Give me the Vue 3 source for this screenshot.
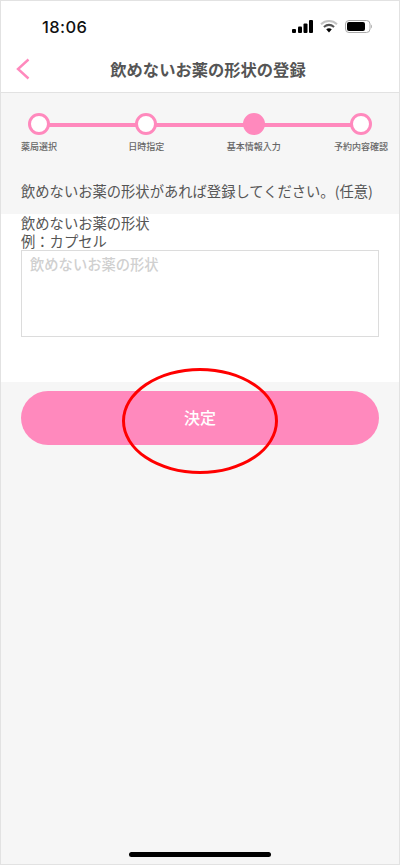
<script setup>
const steps = [
  { label: '薬局選択', active: false },
  { label: '日時指定', active: false },
  { label: '基本情報入力', active: true },
  { label: '予約内容確認', active: false }
]
</script>

<template>
  <div class="phone">
    <header class="top">
      <div class="status">
        <span class="time">18:06</span>
        <div class="status-icons">
          <svg width="21" height="13" viewBox="0 0 21 13">
            <rect x="0" y="9" width="4" height="4" rx="1" fill="#000" />
            <rect x="6" y="6.5" width="4" height="6.5" rx="1" fill="#000" />
            <rect x="11.5" y="3.5" width="4" height="9.5" rx="1" fill="#000" />
            <rect x="17" y="0" width="4" height="13" rx="1" fill="#000" />
          </svg>
          <svg width="18" height="13" viewBox="0 0 18 13">
            <path d="M1 4.2C5.6 0 12.4 0 17 4.2" fill="none" stroke="#c4c4c4" stroke-width="2" />
            <path d="M3.9 7C7 4.4 11 4.4 14.1 7" fill="none" stroke="#555" stroke-width="2" />
            <path d="M6.2 9.2 9 12.4l2.8-3.2C10 7.9 8 7.9 6.2 9.2z" fill="#000" />
          </svg>
          <svg width="28" height="13" viewBox="0 0 28 13">
            <rect x="0.5" y="0.5" width="24.5" height="12" rx="3.5" fill="none" stroke="#aaa" />
            <rect x="2" y="2" width="18" height="9" rx="2" fill="#000" />
            <path d="M26 4.5c1.2.4 1.2 3.6 0 4z" fill="#aaa" />
          </svg>
        </div>
      </div>
      <div class="nav">
        <svg class="back" width="14" height="22" viewBox="0 0 14 22">
          <path d="M12.5 1.5 2 11l10.5 9.5" fill="none" stroke="#ff89bd" stroke-width="2.4" />
        </svg>
        <h1>飲めないお薬の形状の登録</h1>
      </div>
    </header>

    <section class="intro">
      <div class="steps">
        <div v-for="step in steps" :key="step.label" class="step">
          <span class="dot" :class="{ active: step.active }"></span>
          <span class="step-label">{{ step.label }}</span>
        </div>
      </div>
      <p class="lead">飲めないお薬の形状があれば登録してください。(任意)</p>
    </section>

    <section class="form">
      <label for="shape">
        <span class="label-line">飲めないお薬の形状</span>
        <span class="label-line">例：カプセル</span>
      </label>
      <textarea id="shape" placeholder="飲めないお薬の形状"></textarea>
    </section>

    <div class="actions">
      <button type="button">決定</button>
      <div class="ring"></div>
    </div>

    <div class="home-bar"></div>
  </div>
</template>

<style>
html, body { margin: 0; }
</style>

<style scoped>
.phone {
  box-sizing: border-box;
  width: 400px;
  height: 865px;
  border: 1px solid #e2e2e2;
  background: #f6f6f6;
  display: flex;
  flex-direction: column;
  position: relative;
  overflow: hidden;
  font-family: "Noto Sans CJK JP", "Liberation Sans", sans-serif;
  color: #555;
}

.top { background: #fff; height: 91px; border-bottom: 1px solid #e2e2e2; flex: none; }
.status { display: flex; justify-content: space-between; align-items: center; height: 52px; padding: 0 26px 0 41px; }
.time { font-family: Inter, "Liberation Sans", sans-serif; font-size: 16.5px; font-weight: 500; color: #111; letter-spacing: 0.4px; }
.status-icons { display: flex; align-items: center; gap: 7px; margin-top: -2px; }

.nav { position: relative; height: 36px; display: flex; align-items: center; justify-content: center; margin-top: -2px; padding-left: 16px; }
.nav h1 { margin: 0; font-size: 16.3px; font-weight: 700; color: #555; line-height: 22px; }
.back { position: absolute; left: 15px; top: 7px; }

.intro { box-sizing: border-box; height: 121px; padding: 20px 0 0; flex: none; }
.steps {
  display: flex;
  justify-content: space-between;
  margin: 0 27px;
  position: relative;
}
.steps::before {
  content: "";
  position: absolute;
  left: 10px;
  right: 10px;
  top: 10px;
  height: 4px;
  background: #ff89bd;
}
.step { width: 22px; display: flex; flex-direction: column; align-items: center; position: relative; }
.dot {
  box-sizing: border-box;
  width: 22px;
  height: 22px;
  border-radius: 50%;
  border: 3px solid #ff89bd;
  background: #fff;
}
.dot.active { background: #ff89bd; }
.step-label { font-size: 9px; line-height: 12px; margin-top: 6px; white-space: nowrap; font-weight: 500; color: #666; }

.lead { margin: 28px 0 0 20px; font-size: 14.3px; line-height: 20px; white-space: nowrap; color: #555; }

.form { background: #fff; height: 168px; padding: 0 20px; box-sizing: border-box; flex: none; }
.form label { display: block; font-size: 14.3px; color: #555; }
.label-line { display: block; line-height: 18px; }
.form textarea {
  display: block;
  box-sizing: border-box;
  width: 358px;
  height: 87px;
  margin: 0;
  padding: 3px 8px;
  border: 1px solid #dcdcdc;
  border-radius: 0;
  outline: none;
  resize: none;
  font-family: inherit;
  font-size: 14.3px;
  line-height: 20px;
  background: #fff;
}
.form textarea::placeholder { color: #d0d0d0; font-weight: 500; opacity: 1; }

.actions { padding: 9px 20px 0; position: relative; }
.actions button {
  display: block;
  width: 358px;
  height: 54px;
  border: 0;
  border-radius: 27px;
  background: #ff89bd;
  color: #fff;
  font-family: inherit;
  font-size: 16px;
  font-weight: 500;
  padding: 0 0 2px;
}
.ring {
  position: absolute;
  left: 121px;
  top: -14px;
  width: 156px;
  height: 106px;
  box-sizing: border-box;
  border: 3px solid #f00;
  border-radius: 50%;
}

.home-bar {
  position: absolute;
  left: 128px;
  bottom: 7px;
  width: 142px;
  height: 5px;
  border-radius: 3px;
  background: #000;
}
</style>
